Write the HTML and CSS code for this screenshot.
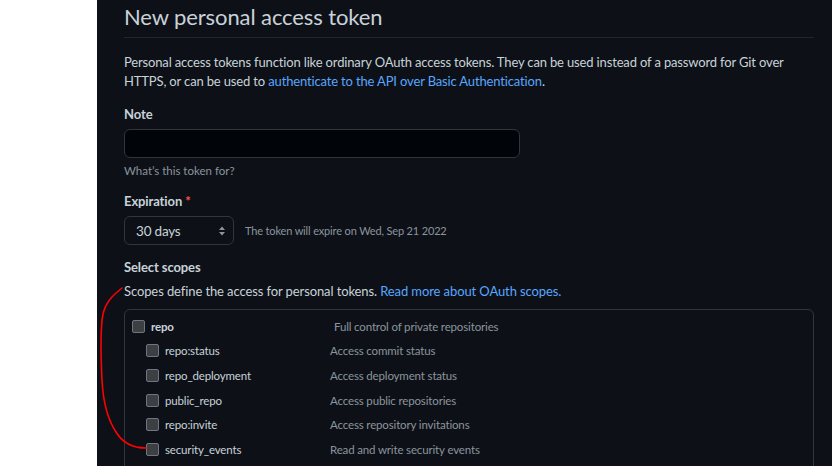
FILE: index.html
```html
<!DOCTYPE html>
<html>
<head>
<meta charset="utf-8">
<link rel="stylesheet" href="styles.css">
</head>
<body>
<div class="page">
  <div class="side"></div>
  <main class="main">
    <h1 class="title">New personal access token</h1>
    <p class="intro">Personal access tokens function like ordinary OAuth access tokens. They can be used instead of a password for Git over HTTPS, or can be used to <a class="link">authenticate to the API over Basic Authentication</a>.</p>

    <div class="field">
      <div class="label">Note</div>
      <div class="input"></div>
      <div class="hint">What’s this token for?</div>
    </div>

    <div class="field exp-field">
      <div class="label">Expiration <span class="req">*</span></div>
      <div class="exp-row">
        <div class="select">30 days
          <svg class="arrows" width="8" height="12" viewBox="0 0 8 12"><path d="M4 1.5 L7 5 H1 Z M4 10.5 L7 7 H1 Z" fill="#8b949e"/></svg>
        </div>
        <span class="exp-note">The token will expire on Wed, Sep 21 2022</span>
      </div>
    </div>

    <div class="field scopes-field">
      <div class="label">Select scopes</div>
      <p class="scopes-desc">Scopes define the access for personal tokens. <a class="link">Read more about OAuth scopes.</a></p>
      <div class="scopes">
        <div class="row parent"><span class="cb"></span><span class="name">repo</span><span class="desc">Full control of private repositories</span></div>
        <div class="row child"><span class="cb"></span><span class="name">repo:status</span><span class="desc">Access commit status</span></div>
        <div class="row child"><span class="cb"></span><span class="name">repo_deployment</span><span class="desc">Access deployment status</span></div>
        <div class="row child"><span class="cb"></span><span class="name">public_repo</span><span class="desc">Access public repositories</span></div>
        <div class="row child"><span class="cb"></span><span class="name">repo:invite</span><span class="desc">Access repository invitations</span></div>
        <div class="row child"><span class="cb"></span><span class="name">security_events</span><span class="desc">Read and write security events</span></div>
      </div>
    </div>
  </main>
  <svg class="annot" width="832" height="466" viewBox="0 0 832 466"><path d="M122 288 C112 296 106 302 103 314 C100 330 101 360 102 380 C103 400 108 420 116 432 C122 442 132 448 146 448" fill="none" stroke="#ff0000" stroke-width="1.6" stroke-linecap="round"/></svg>
</div>
</body>
</html>
```
FILE: styles.css
```css
html, body { margin: 0; padding: 0; }
body { background: #fff; font-family: Lato, "Noto Sans", sans-serif; overflow: hidden; }
.page { display: flex; width: 832px; height: 466px; position: relative; overflow: hidden; }
.side { width: 97px; flex: none; background: #ffffff; }
.main { flex: 1; background: #0d1117; padding: 0 18px 0 27px; color: #c9d1d9; }
.title { margin: 0; font-size: 22px; font-weight: 400; line-height: 34px; border-bottom: 1px solid #21262d; height: 38px; box-sizing: border-box; letter-spacing: -0.1px; }
.intro { margin: 15px 0 0; font-size: 13px; letter-spacing: -0.15px; line-height: 19px; }
.link { color: #58a6ff; text-decoration: none; }
.field { margin-top: 14px; }
.exp-field { margin-top: 13px; }
.label { font-size: 13px; font-weight: 700; line-height: 18px; letter-spacing: -0.1px; }
.req { color: #f85149; }
.input { margin-top: 6px; width: 396px; height: 29px; box-sizing: border-box; background: #010409; border: 1px solid #30363d; border-radius: 6px; }
.hint { font-size: 11.5px; letter-spacing: 0; color: #8b949e; margin-top: 5px; line-height: 16px; }
.exp-row { display: flex; align-items: center; margin-top: 6px; gap: 11px; }
.select { width: 110px; height: 29px; box-sizing: border-box; border: 1px solid #30363d; border-radius: 6px; background: #0d1117; font-size: 13.5px; letter-spacing: -0.2px; display: flex; align-items: center; justify-content: space-between; padding: 0 7px 0 11px; }
.exp-note { font-size: 11px; letter-spacing: -0.15px; color: #8b949e; }
.scopes-field { margin-top: 13px; }
.scopes-desc { margin: 6px 0 0; font-size: 13px; letter-spacing: -0.1px; line-height: 18px; }
.scopes { margin-top: 9px; border: 1px solid #30363d; border-radius: 6px; height: 200px; padding-top: 4px; box-sizing: border-box; }
.row { display: flex; align-items: center; height: 24.6px; font-size: 11.5px; letter-spacing: -0.15px; }
.row.parent { padding-left: 7px; }
.row.child { padding-left: 21px; }
.cb { width: 11px; height: 11px; border: 1px solid #6e7681; background: #3d3f42; border-radius: 2px; flex: none; }
.name { color: #c9d1d9; margin-left: 6px; }
.parent .name { font-weight: 700; width: 183px; }
.child .name { width: 165px; }
.desc { color: #8b949e; }
.annot { position: absolute; left: 0; top: 0; pointer-events: none; }
```
